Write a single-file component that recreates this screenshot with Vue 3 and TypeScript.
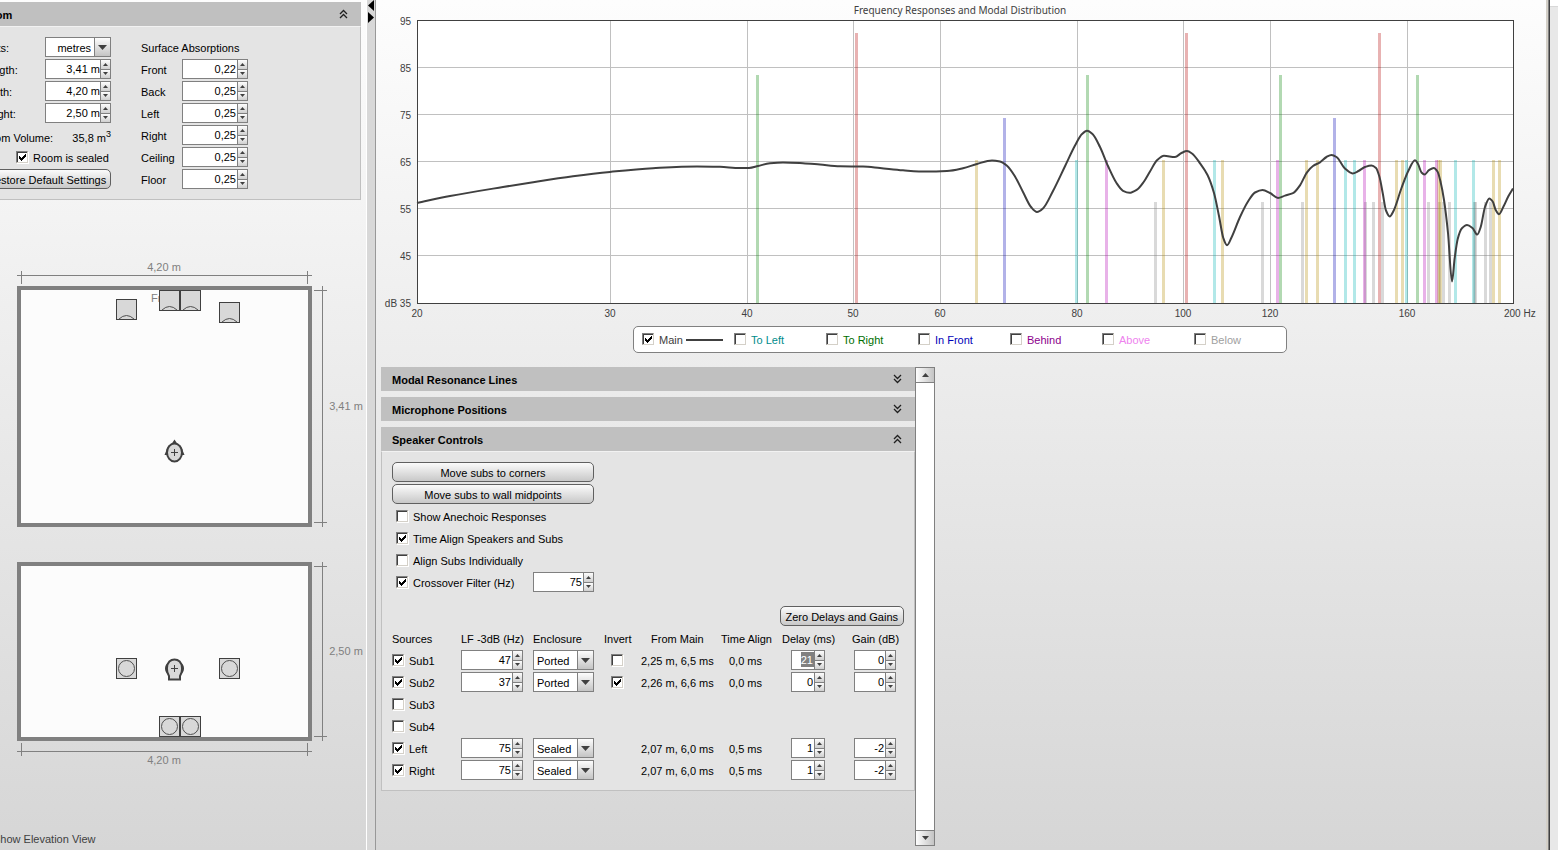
<script setup lang="ts">
import { ref } from 'vue'

type Point = [number, number]

/* ---------- Room panel ---------- */
const units = ref('metres')
const sealed = ref(true)
const elevation = ref(true)
const dimensions = ref([
  { id: 'length', label: 'Length:', value: '3,41 m' },
  { id: 'width', label: 'Width:', value: '4,20 m' },
  { id: 'height', label: 'Height:', value: '2,50 m' },
])
const absorptions = ref([
  { label: 'Front', value: '0,22' },
  { label: 'Back', value: '0,25' },
  { label: 'Left', value: '0,25' },
  { label: 'Right', value: '0,25' },
  { label: 'Ceiling', value: '0,25' },
  { label: 'Floor', value: '0,25' },
])

const topSpeakers: Point[] = [[116, 299], [159, 290], [180, 290], [219, 302]]
const frontSpeakers: Point[] = [[116, 658], [159, 716], [180, 716], [219, 658]]

/* ---------- Frequency chart ---------- */
const gridX = [610, 747, 853, 940, 1077, 1183, 1270, 1407]
const gridY = [67, 114, 161, 208, 255]
const yLabels = [
  { text: '95', y: 25 },
  { text: '85', y: 72 },
  { text: '75', y: 119 },
  { text: '65', y: 166 },
  { text: '55', y: 213 },
  { text: '45', y: 260 },
  { text: 'dB 35', y: 307 },
]
const xLabels = [
  { text: '20', x: 417 },
  { text: '30', x: 610 },
  { text: '40', x: 747 },
  { text: '50', x: 853 },
  { text: '60', x: 940 },
  { text: '80', x: 1077 },
  { text: '100', x: 1183 },
  { text: '120', x: 1270 },
  { text: '160', x: 1407 },
]
const modes = [
  { kind: 'oblique', top: 202, at: [1154, 1261, 1301, 1364, 1372, 1381, 1427, 1438, 1442, 1448, 1473, 1474, 1484, 1489] },
  { kind: 'length', top: 33, at: [855, 1185, 1378] },
  { kind: 'width', top: 75, at: [756, 1086, 1279, 1416] },
  { kind: 'height', top: 118, at: [1003, 1333] },
  { kind: 'length-width', top: 160, at: [975, 1162, 1221, 1305, 1316, 1395, 1401, 1437, 1439, 1492, 1498] },
  { kind: 'width-height', top: 160, at: [1075, 1213, 1344, 1353, 1405, 1454, 1472] },
  { kind: 'length-height', top: 160, at: [1105, 1276, 1363, 1423, 1435] },
]
const response: Point[] = [
  [417, 203], [450, 196], [503, 187], [530, 182.7], [573, 176.3], [610, 171.9], [653, 168.2], [697, 166.4],
  [720, 166.8], [740, 168], [749, 167.9], [758, 166], [770, 163.2], [783, 162.4], [803, 163.2], [820, 164.6],
  [840, 166.3], [863, 166.5], [880, 168], [903, 170.3], [927, 171.6], [947, 171], [963, 168.2], [977, 164],
  [992, 160.4], [1000, 161.5], [1007, 165.8], [1015, 176.5], [1023, 192], [1031, 207], [1037, 212], [1043, 208.4],
  [1053, 191], [1065, 166.2], [1075, 145.5], [1082, 134], [1087, 130.8], [1092.5, 134], [1100, 147], [1108, 166],
  [1116.5, 183], [1123, 190.8], [1129.5, 192.8], [1137, 189.6], [1144, 181.5], [1150, 171.5], [1157, 160.3],
  [1164, 155.8], [1175, 157], [1181.5, 153], [1187, 151.1], [1192, 153.5], [1200, 163.3], [1207.5, 175],
  [1214, 193], [1219, 216], [1223.3, 238], [1227, 245.3], [1231.5, 237.5], [1240, 217], [1248, 201.5],
  [1255, 192.5], [1262.5, 190], [1270, 193], [1278, 197.9], [1285, 195.6], [1293, 193.2], [1300, 185.3],
  [1307, 172.3], [1313, 166], [1320, 162.3], [1326.5, 157], [1331.5, 154.9], [1336.5, 157], [1345, 168.5],
  [1352.5, 173.4], [1358.5, 171], [1365, 167], [1371.5, 165.5], [1376, 168], [1379.5, 177], [1382.7, 193],
  [1386, 210.5], [1389.7, 216.4], [1393.5, 211], [1401.5, 188], [1408.5, 170.5], [1415, 160.2], [1418, 164],
  [1421.5, 172.5], [1424.5, 174.6], [1429, 170.2], [1433.7, 167.9], [1437.5, 171.5], [1440.7, 182.5],
  [1444, 200], [1448, 233], [1452, 281.5], [1454.7, 258], [1457.7, 239], [1461.7, 228.5], [1467, 225],
  [1472.5, 228], [1477.3, 234.6], [1480.7, 227], [1485, 207], [1489.3, 198.4], [1492.7, 201.5],
  [1495.7, 210], [1499, 214.2], [1503.5, 206.5], [1508.5, 196], [1513, 188.5],
]

/* Monotone cubic interpolation, so peaks and dips never overshoot. */
function smoothPath(p: Point[]): string {
  const n = p.length
  const slope: number[] = []
  for (let i = 0; i < n - 1; i++) slope.push((p[i + 1][1] - p[i][1]) / (p[i + 1][0] - p[i][0]))
  const t: number[] = [slope[0]]
  for (let i = 1; i < n - 1; i++) {
    const a = slope[i - 1]
    const b = slope[i]
    t.push(a * b <= 0 ? 0 : (2 * a * b) / (a + b))
  }
  t.push(slope[n - 2])
  let d = `M${p[0][0]} ${p[0][1]}`
  for (let i = 0; i < n - 1; i++) {
    const h = (p[i + 1][0] - p[i][0]) / 3
    const c = [p[i][0] + h, p[i][1] + h * t[i], p[i + 1][0] - h, p[i + 1][1] - h * t[i + 1]]
    d += `C${c.map((v) => v.toFixed(2)).join(' ')} ${p[i + 1][0]} ${p[i + 1][1]}`
  }
  return d
}
const responsePath = smoothPath(response)

const traces = ref([
  { name: 'Main', tone: 'main-trace', on: true },
  { name: 'To Left', tone: 'to-left', on: false },
  { name: 'To Right', tone: 'to-right', on: false },
  { name: 'In Front', tone: 'in-front', on: false },
  { name: 'Behind', tone: 'behind', on: false },
  { name: 'Above', tone: 'above', on: false },
  { name: 'Below', tone: 'below', on: false },
])

/* ---------- Speaker controls ---------- */
const options = ref([
  { label: 'Show Anechoic Responses', on: false },
  { label: 'Time Align Speakers and Subs', on: true },
  { label: 'Align Subs Individually', on: false },
])
const crossoverOn = ref(true)
const crossover = ref('75')

interface Source {
  name: string
  on: boolean
  lf?: string
  enclosure?: string
  invert?: boolean
  distance?: string
  align?: string
  delay?: string
  gain?: string
}
const sources = ref<Source[]>([
  { name: 'Sub1', on: true, lf: '47', enclosure: 'Ported', invert: false, distance: '2,25 m, 6,5 ms', align: '0,0 ms', delay: '21', gain: '0' },
  { name: 'Sub2', on: true, lf: '37', enclosure: 'Ported', invert: true, distance: '2,26 m, 6,6 ms', align: '0,0 ms', delay: '0', gain: '0' },
  { name: 'Sub3', on: false },
  { name: 'Sub4', on: false },
  { name: 'Left', on: true, lf: '75', enclosure: 'Sealed', distance: '2,07 m, 6,0 ms', align: '0,5 ms', delay: '1', gain: '-2' },
  { name: 'Right', on: true, lf: '75', enclosure: 'Sealed', distance: '2,07 m, 6,0 ms', align: '0,5 ms', delay: '1', gain: '-2' },
])
</script>

<template>
  <div class="app">
    <aside class="side">
      <section class="panel room">
        <button class="panel-head" type="button">
          <span>Room</span>
          <svg class="chevron" viewBox="0 0 9 10"><path d="M1 5 4.500 1.500 8 5M1 9 4.500 5.500 8 9" /></svg>
        </button>
        <div class="panel-body room-body">
          <div class="rows">
            <div class="row split">
              <label for="units">Units:</label>
              <span class="combo wide right">
                <select id="units" v-model="units"><option>metres</option></select>
                <i class="combo-arrow"><svg viewBox="0 0 9 5"><path d="M0 0h9L4.500 5z" /></svg></i>
              </span>
            </div>
            <div v-for="d in dimensions" :key="d.id" class="row split">
              <label :for="d.id">{{ d.label }}</label>
              <span class="spin wide flush">
                <input :id="d.id" v-model="d.value" type="text" />
                <span class="spin-buttons">
                  <button type="button" aria-label="Increase"><svg viewBox="0 0 5 3"><path d="M0 3h5L2.500 0z" /></svg></button>
                  <button type="button" aria-label="Decrease"><svg viewBox="0 0 5 3"><path d="M0 0h5L2.500 3z" /></svg></button>
                </span>
              </span>
            </div>
            <div class="row split volume"><span>Room Volume:</span><span>35,8 m<sup>3</sup></span></div>
            <label class="row check sealed"><input v-model="sealed" type="checkbox" />Room is sealed</label>
            <button class="push" type="button">Restore Default Settings</button>
          </div>
          <div class="rows absorb">
            <div class="row text-row">Surface Absorptions</div>
            <div v-for="a in absorptions" :key="a.label" class="row split">
              <label :for="'abs-' + a.label">{{ a.label }}</label>
              <span class="spin wide">
                <input :id="'abs-' + a.label" v-model="a.value" type="text" />
                <span class="spin-buttons">
                  <button type="button" aria-label="Increase"><svg viewBox="0 0 5 3"><path d="M0 3h5L2.500 0z" /></svg></button>
                  <button type="button" aria-label="Decrease"><svg viewBox="0 0 5 3"><path d="M0 0h5L2.500 3z" /></svg></button>
                </span>
              </span>
            </div>
          </div>
        </div>
      </section>

      <svg class="plan" viewBox="0 250 366 290" role="img" aria-label="Room plan view">
        <g class="dim">
          <path d="M17 275.500H312M21.500 271V284M307.500 271V284M322.500 286V527M314 290.500H327M314 522.500H327" />
          <text x="164" y="271" text-anchor="middle">4,20 m</text>
          <text x="346" y="410" text-anchor="middle">3,41 m</text>
        </g>
        <rect class="walls" x="19" y="288" width="291" height="237" />
        <text class="wall-name" x="151" y="302">Front</text>
        <g v-for="(s, i) in topSpeakers" :key="i" :transform="`translate(${s[0]} ${s[1]})`">
          <rect class="box" x="0.500" y="0.500" width="20" height="20" />
          <path class="cone" d="M3 20Q10.500 13 18 20" />
        </g>
        <g class="head">
          <path class="solid" d="M171.500 444 174.500 439.500 177.500 444ZM168.500 445 164.500 455H168.500ZM180.500 445 184.500 455H180.500Z" />
          <ellipse cx="174.500" cy="452.500" rx="7.500" ry="9" />
          <path class="cross" d="M171 452.500H178M174.500 449V456" />
        </g>
      </svg>

      <svg class="plan" viewBox="0 540 366 240" role="img" aria-label="Room elevation view">
        <g class="dim">
          <path d="M17 751.500H312M21.500 743V756M307.500 743V756M322.500 562V741M314 566.500H327M314 736.500H327" />
          <text x="164" y="764" text-anchor="middle">4,20 m</text>
          <text x="346" y="655" text-anchor="middle">2,50 m</text>
        </g>
        <rect class="walls" x="19" y="564" width="291" height="175" />
        <g v-for="(s, i) in frontSpeakers" :key="i" :transform="`translate(${s[0]} ${s[1]})`">
          <rect class="box" x="0.500" y="0.500" width="20" height="20" />
          <circle class="cone" cx="10.500" cy="10.500" r="8" />
        </g>
        <g class="head">
          <path class="solid" d="M168 663C164 665 164 672 168 674ZM181 663C185 665 185 672 181 674Z" />
          <path d="M169 679.500V676C166.500 672 167 670 167 668C167 656.500 182 656.500 182 668C182 670 182.500 672 180 676V679.500Z" />
          <path class="cross" d="M171 668.500H178M174.500 665V672" />
        </g>
      </svg>

      <label class="check elevation"><input v-model="elevation" type="checkbox" />Show Elevation View</label>
    </aside>

    <div class="splitter">
      <button type="button" aria-label="Collapse left"><svg viewBox="0 0 6 11"><path d="M6 0v11L0 5.500z" /></svg></button>
      <button type="button" aria-label="Collapse right"><svg viewBox="0 0 6 11"><path d="M0 0v11L6 5.500z" /></svg></button>
    </div>

    <main class="main">
      <svg class="chart" viewBox="376 0 1170 325" role="img" aria-label="Frequency Responses and Modal Distribution">
        <text class="chart-title" x="960" y="14" text-anchor="middle">Frequency Responses and Modal Distribution</text>
        <rect x="417" y="20" width="1096" height="283" fill="#fff" />
        <g class="grid">
          <rect v-for="x in gridX" :key="'x' + x" :x="x" y="21" width="1" height="282" />
          <rect v-for="y in gridY" :key="'y' + y" x="418" :y="y" width="1095" height="1" />
        </g>
        <g v-for="m in modes" :key="m.kind" :class="['mode', m.kind]">
          <rect v-for="x in m.at" :key="x" :x="x" :y="m.top" width="3" :height="303 - m.top" />
        </g>
        <path class="response" :d="responsePath" />
        <rect class="frame" x="417.500" y="20.500" width="1096" height="283" />
        <g class="axis">
          <text v-for="l in yLabels" :key="l.text" x="411" :y="l.y" text-anchor="end">{{ l.text }}</text>
          <text v-for="l in xLabels" :key="l.text" :x="l.x" y="317" text-anchor="middle">{{ l.text }}</text>
          <text x="1504" y="317">200 Hz</text>
        </g>
      </svg>

      <div class="legend">
        <label v-for="t in traces" :key="t.name" :class="['check', t.tone]">
          <input v-model="t.on" type="checkbox" />{{ t.name }}<i v-if="t.on" class="swatch"></i>
        </label>
      </div>

      <div class="controls">
        <div class="stack">
          <button class="panel-head" type="button">
            <span>Modal Resonance Lines</span>
            <svg class="chevron" viewBox="0 0 9 10"><path d="M1 1 4.500 4.500 8 1M1 5 4.500 8.500 8 5" /></svg>
          </button>
          <button class="panel-head" type="button">
            <span>Microphone Positions</span>
            <svg class="chevron" viewBox="0 0 9 10"><path d="M1 1 4.500 4.500 8 1M1 5 4.500 8.500 8 5" /></svg>
          </button>
          <section class="panel">
            <button class="panel-head" type="button">
              <span>Speaker Controls</span>
              <svg class="chevron" viewBox="0 0 9 10"><path d="M1 5 4.500 1.500 8 5M1 9 4.500 5.500 8 9" /></svg>
            </button>
            <div class="panel-body">
              <div class="rows sub-options">
                <button class="push" type="button">Move subs to corners</button>
                <button class="push" type="button">Move subs to wall midpoints</button>
                <label v-for="o in options" :key="o.label" class="row check indent"><input v-model="o.on" type="checkbox" />{{ o.label }}</label>
                <div class="row split">
                  <label class="check indent"><input v-model="crossoverOn" type="checkbox" />Crossover Filter (Hz)</label>
                  <span class="spin medium">
                    <input v-model="crossover" type="text" aria-label="Crossover frequency" />
                    <span class="spin-buttons">
                      <button type="button" aria-label="Increase"><svg viewBox="0 0 5 3"><path d="M0 3h5L2.500 0z" /></svg></button>
                      <button type="button" aria-label="Decrease"><svg viewBox="0 0 5 3"><path d="M0 0h5L2.500 3z" /></svg></button>
                    </span>
                  </span>
                </div>
              </div>
              <div class="zero"><button class="push" type="button">Zero Delays and Gains</button></div>
              <table class="sources">
                <colgroup>
                  <col class="c-name" /><col class="c-lf" /><col class="c-enc" /><col class="c-inv" />
                  <col class="c-from" /><col class="c-align" /><col class="c-delay" /><col />
                </colgroup>
                <thead>
                  <tr>
                    <th>Sources</th><th>LF -3dB (Hz)</th><th>Enclosure</th><th>Invert</th>
                    <th class="from">From Main</th><th>Time Align</th><th>Delay (ms)</th><th>Gain (dB)</th>
                  </tr>
                </thead>
                <tbody>
                  <tr v-for="(s, i) in sources" :key="s.name">
                    <td><label class="check"><input v-model="s.on" type="checkbox" />{{ s.name }}</label></td>
                    <td>
                      <span v-if="s.lf" class="spin lf">
                        <input v-model="s.lf" type="text" :aria-label="s.name + ' LF -3dB'" />
                        <span class="spin-buttons">
                          <button type="button" aria-label="Increase"><svg viewBox="0 0 5 3"><path d="M0 3h5L2.500 0z" /></svg></button>
                          <button type="button" aria-label="Decrease"><svg viewBox="0 0 5 3"><path d="M0 0h5L2.500 3z" /></svg></button>
                        </span>
                      </span>
                    </td>
                    <td>
                      <span v-if="s.enclosure" class="combo medium">
                        <select v-model="s.enclosure" :aria-label="s.name + ' enclosure'"><option>Ported</option><option>Sealed</option></select>
                        <i class="combo-arrow"><svg viewBox="0 0 9 5"><path d="M0 0h9L4.500 5z" /></svg></i>
                      </span>
                    </td>
                    <td class="inv">
                      <label v-if="s.invert !== undefined" class="check"><input v-model="s.invert" type="checkbox" :aria-label="s.name + ' invert'" /></label>
                    </td>
                    <td><div class="value">{{ s.distance }}</div></td>
                    <td class="align"><div class="value">{{ s.align }}</div></td>
                    <td class="delay">
                      <span v-if="s.delay" class="spin small" :class="{ selected: i === 0 }">
                        <input v-model="s.delay" type="text" :aria-label="s.name + ' delay'" />
                        <span class="spin-buttons">
                          <button type="button" aria-label="Increase"><svg viewBox="0 0 5 3"><path d="M0 3h5L2.500 0z" /></svg></button>
                          <button type="button" aria-label="Decrease"><svg viewBox="0 0 5 3"><path d="M0 0h5L2.500 3z" /></svg></button>
                        </span>
                      </span>
                    </td>
                    <td class="gain">
                      <span v-if="s.gain" class="spin gain-spin">
                        <input v-model="s.gain" type="text" :aria-label="s.name + ' gain'" />
                        <span class="spin-buttons">
                          <button type="button" aria-label="Increase"><svg viewBox="0 0 5 3"><path d="M0 3h5L2.500 0z" /></svg></button>
                          <button type="button" aria-label="Decrease"><svg viewBox="0 0 5 3"><path d="M0 0h5L2.500 3z" /></svg></button>
                        </span>
                      </span>
                    </td>
                  </tr>
                </tbody>
              </table>
            </div>
          </section>
        </div>
        <div class="scrollbar">
          <button type="button" aria-label="Scroll up"><svg viewBox="0 0 7 4"><path d="M0 4h7L3.500 0z" /></svg></button>
          <button type="button" aria-label="Scroll down"><svg viewBox="0 0 7 4"><path d="M0 0h7L3.500 4z" /></svg></button>
        </div>
      </div>
    </main>

    <div class="edge"></div>
  </div>
</template>

<style>
body {
  margin: 0;
  background: #e8e8e8;
}
</style>

<style scoped>
.app {
  display: flex;
  min-height: 100vh;
  overflow: hidden;
  font: 11px/14px "Liberation Sans", Arial, sans-serif;
  color: #000;
}
.app * {
  box-sizing: border-box;
}
button,
input,
select {
  font: inherit;
  color: inherit;
  margin: 0;
}
button {
  padding: 0;
  border: 0;
}
svg {
  display: block;
}

/* ---------- Panes ---------- */
.side,
.main {
  background: linear-gradient(#fdfdfd, #d6d6d6);
  display: flex;
  flex-direction: column;
}
.side {
  flex: 0 0 367px;
  overflow: hidden;
  border-right: 1px solid #fff;
  padding-top: 2px;
}
.splitter {
  flex: 0 0 9px;
  background: #d8d8d8;
  border-right: 1px solid #989898;
  display: flex;
  flex-direction: column;
  gap: 1px;
}
.splitter button {
  width: 8px;
  height: 11px;
  padding-left: 1px;
  background: none;
}
.splitter svg {
  width: 6px;
  height: 11px;
}
.main {
  flex: 1;
  min-width: 0;
}
.edge {
  flex: 0 0 12px;
  border-left: 2px solid #d4d0c8;
  background: linear-gradient(90deg, #808080 1px, #404040 1px, #404040 2px, transparent 2px),
    linear-gradient(#fff 6px, #d8d8d8 6px, #d8d8d8 7px, #e8e8e8 7px);
}

/* ---------- Collapsible panels ---------- */
.panel-head {
  display: flex;
  justify-content: space-between;
  align-items: center;
  width: 100%;
  height: 24px;
  padding: 2px 13px 0 11px;
  background: #c0c0c0;
  font-weight: bold;
}
.chevron {
  width: 9px;
  height: 10px;
  margin-bottom: 3px;
  fill: none;
  stroke: #202020;
  stroke-width: 1.3;
}
.panel-body {
  border: 1px solid #c0c0c0;
  border-top-color: #f2f2f2;
  background: #e4e4e4;
  padding: 10px;
}
.room {
  margin: 0 5px 0 -30px;
}
.room-body {
  display: flex;
  gap: 30px;
}
.rows {
  display: flex;
  flex-direction: column;
  gap: 2px;
  width: 130px;
}
.absorb {
  width: 107px;
}
.sub-options {
  width: 202px;
}
.row {
  height: 20px;
  white-space: nowrap;
}
.text-row {
  padding-top: 4px;
}
.split {
  display: flex;
  justify-content: space-between;
  align-items: flex-start;
}
.split > label:not(.check) {
  padding-top: 4px;
}
.volume {
  padding-top: 6px;
}
sup {
  font-size: 9px;
  line-height: 1px;
  vertical-align: 5px;
}

/* ---------- Controls ---------- */
.check {
  display: flex;
  align-items: center;
  gap: 5px;
  height: 20px;
  padding-top: 2px;
  white-space: nowrap;
}
.check input {
  appearance: none;
  flex: none;
  width: 12px;
  height: 12px;
  margin-bottom: 2px;
  border: 1px solid;
  border-color: #808080 #d4d0c8 #d4d0c8 #808080;
  box-shadow: inset 1px 1px #404040, 1px 1px #fff;
  background: #fff;
}
.check input:checked {
  background: #fff url("data:image/svg+xml,%3Csvg xmlns='http://www.w3.org/2000/svg' viewBox='0 0 10 10' shape-rendering='crispEdges'%3E%3Cpath d='M2 4h1v1h1v1h1v-1h1v-1h1v-1h1v-1h1v3h-1v1h-1v1h-1v1h-1v1h-1v-1h-1v-1h-1z'/%3E%3C/svg%3E") 0 0 / 10px 10px no-repeat;
}
.indent {
  padding-left: 4px;
}
.sealed {
  padding-left: 35px;
}
.push {
  height: 20px;
  padding: 2px 5px 0;
  border: 1px solid #606060;
  border-radius: 5px;
  background: linear-gradient(#fbfbfb, #c8c8c8);
  line-height: 14px;
  white-space: nowrap;
}
.spin,
.combo {
  display: flex;
  height: 20px;
  border: 1px solid #808080;
  background: #fff;
}
.wide {
  width: 66px;
}
.medium {
  width: 61px;
}
.lf {
  width: 62px;
}
.small {
  width: 34px;
}
.gain-spin {
  width: 42px;
}
.spin input {
  flex: 1;
  min-width: 0;
  width: 0;
  height: 18px;
  border: 0;
  padding: 0 1px 0 0;
  background: none;
  text-align: right;
}
.flush input {
  padding-right: 0;
}
.selected input {
  color: #fff;
  background: linear-gradient(#808080, #808080) right 1px / 13px 15px no-repeat;
}
.spin-buttons {
  flex: 0 0 10px;
  display: flex;
  flex-direction: column;
  border-left: 1px solid #808080;
}
.spin-buttons button {
  flex: 1;
  display: flex;
  align-items: center;
  justify-content: center;
  background: linear-gradient(#fdfdfd, #cfcfcf);
}
.spin-buttons button + button {
  border-top: 1px solid #808080;
}
.spin-buttons svg {
  width: 5px;
  height: 3px;
  fill: #404040;
}
.combo select {
  appearance: none;
  flex: 1;
  min-width: 0;
  height: 18px;
  border: 0;
  border-radius: 0;
  padding: 2px 0 0 3px;
  background: none;
}
.right select {
  padding: 2px 3px 0 0;
  text-align: right;
  text-align-last: right;
}
.combo-arrow {
  flex: 0 0 16px;
  display: flex;
  align-items: center;
  justify-content: center;
  border-left: 1px solid #808080;
  background: linear-gradient(#fdfdfd, #c4c4c4);
}
.combo-arrow svg {
  width: 9px;
  height: 5px;
  fill: #404040;
}

/* ---------- Room drawings ---------- */
.plan {
  width: 100%;
  flex: none;
}
.room + .plan {
  margin-top: 50px;
}
.plan text {
  fill: #808080;
}
.dim path {
  fill: none;
  stroke: #808080;
}
.walls {
  fill: #fcfcfc;
  stroke: #808080;
  stroke-width: 4;
}
.box {
  fill: #d8d8d8;
  stroke: #404040;
}
.cone {
  fill: none;
  stroke: #505050;
}
.head {
  fill: #d8d8d8;
  stroke: #404040;
  stroke-width: 2;
}
.head .solid {
  fill: #404040;
  stroke-width: 0;
}
.head .cross {
  stroke-width: 1;
}
.elevation {
  margin: 48px 0 0 -24px;
  color: #404040;
}

/* ---------- Chart ---------- */
.chart {
  width: 100%;
  flex: none;
}
.chart text {
  fill: #404040;
  font-size: 10px;
}
.chart .chart-title {
  font-family: "Noto Sans", sans-serif;
}
.grid {
  fill: #c0c0c0;
}
.frame {
  fill: none;
  stroke: #404040;
}
.response {
  fill: none;
  stroke: #404040;
  stroke-width: 2;
}
.mode {
  fill-opacity: 0.3;
}
.length {
  fill: #b20000;
}
.width {
  fill: #008000;
}
.height {
  fill: #0000b2;
}
.length-width {
  fill: #b28c00;
}
.width-height {
  fill: #00b2b2;
}
.length-height {
  fill: #b200b2;
}
.oblique {
  fill: #808080;
}
.legend {
  align-self: center;
  display: flex;
  height: 27px;
  margin: 1px 2px 0 0;
  padding: 2px 0 0 8px;
  border: 1px solid #808080;
  border-radius: 5px;
  background: #fff;
}
.legend .check {
  width: 92px;
}
.swatch {
  width: 37px;
  height: 2px;
  background: #404040;
  margin-left: -2px;
}
.main-trace {
  color: #404040;
}
.to-left {
  color: #008c8c;
}
.to-right {
  color: #006e00;
}
.in-front {
  color: #0000b8;
}
.behind {
  color: #8c008c;
}
.above {
  color: #ee82ee;
}
.below {
  color: #a0a0a0;
}

/* ---------- Controls area ---------- */
.controls {
  flex: 1;
  display: flex;
  margin: 14px 0 4px 5px;
}
.stack {
  width: 534px;
  display: flex;
  flex-direction: column;
  gap: 6px;
}
.zero {
  display: flex;
  justify-content: flex-end;
  margin-top: 14px;
}
.sources {
  width: 512px;
  margin-top: 2px;
  border-collapse: collapse;
  table-layout: fixed;
}
.sources th,
.sources td {
  height: 22px;
  padding: 0;
  text-align: left;
  font-weight: normal;
  white-space: nowrap;
  vertical-align: middle;
}
.sources td {
  padding-bottom: 2px;
}
.sources tr:last-child td {
  height: 20px;
  padding-bottom: 0;
}
.sources thead th {
  height: 22px;
}
.value {
  padding-top: 2px;
}
.c-name {
  width: 69px;
}
.c-lf {
  width: 72px;
}
.c-enc {
  width: 71px;
}
.c-inv {
  width: 37px;
}
.c-from {
  width: 80px;
}
.c-align {
  width: 61px;
}
.c-delay {
  width: 70px;
}
.sources .from {
  padding-left: 10px;
}
.sources .inv {
  padding-left: 7px;
}
.sources .align {
  padding-left: 8px;
}
.sources .delay {
  padding-left: 9px;
}
.sources .gain {
  padding-left: 2px;
}
.scrollbar {
  width: 20px;
  display: flex;
  flex-direction: column;
  justify-content: space-between;
  border: 1px solid #808080;
  background: #fff;
}
.scrollbar button {
  height: 15px;
  display: flex;
  align-items: center;
  justify-content: center;
  border-bottom: 1px solid #808080;
  background: linear-gradient(90deg, #fdfdfd, #c4c4c4);
}
.scrollbar button:last-child {
  border-bottom: 0;
  border-top: 1px solid #808080;
}
.scrollbar svg {
  width: 7px;
  height: 4px;
  fill: #404040;
}
</style>
